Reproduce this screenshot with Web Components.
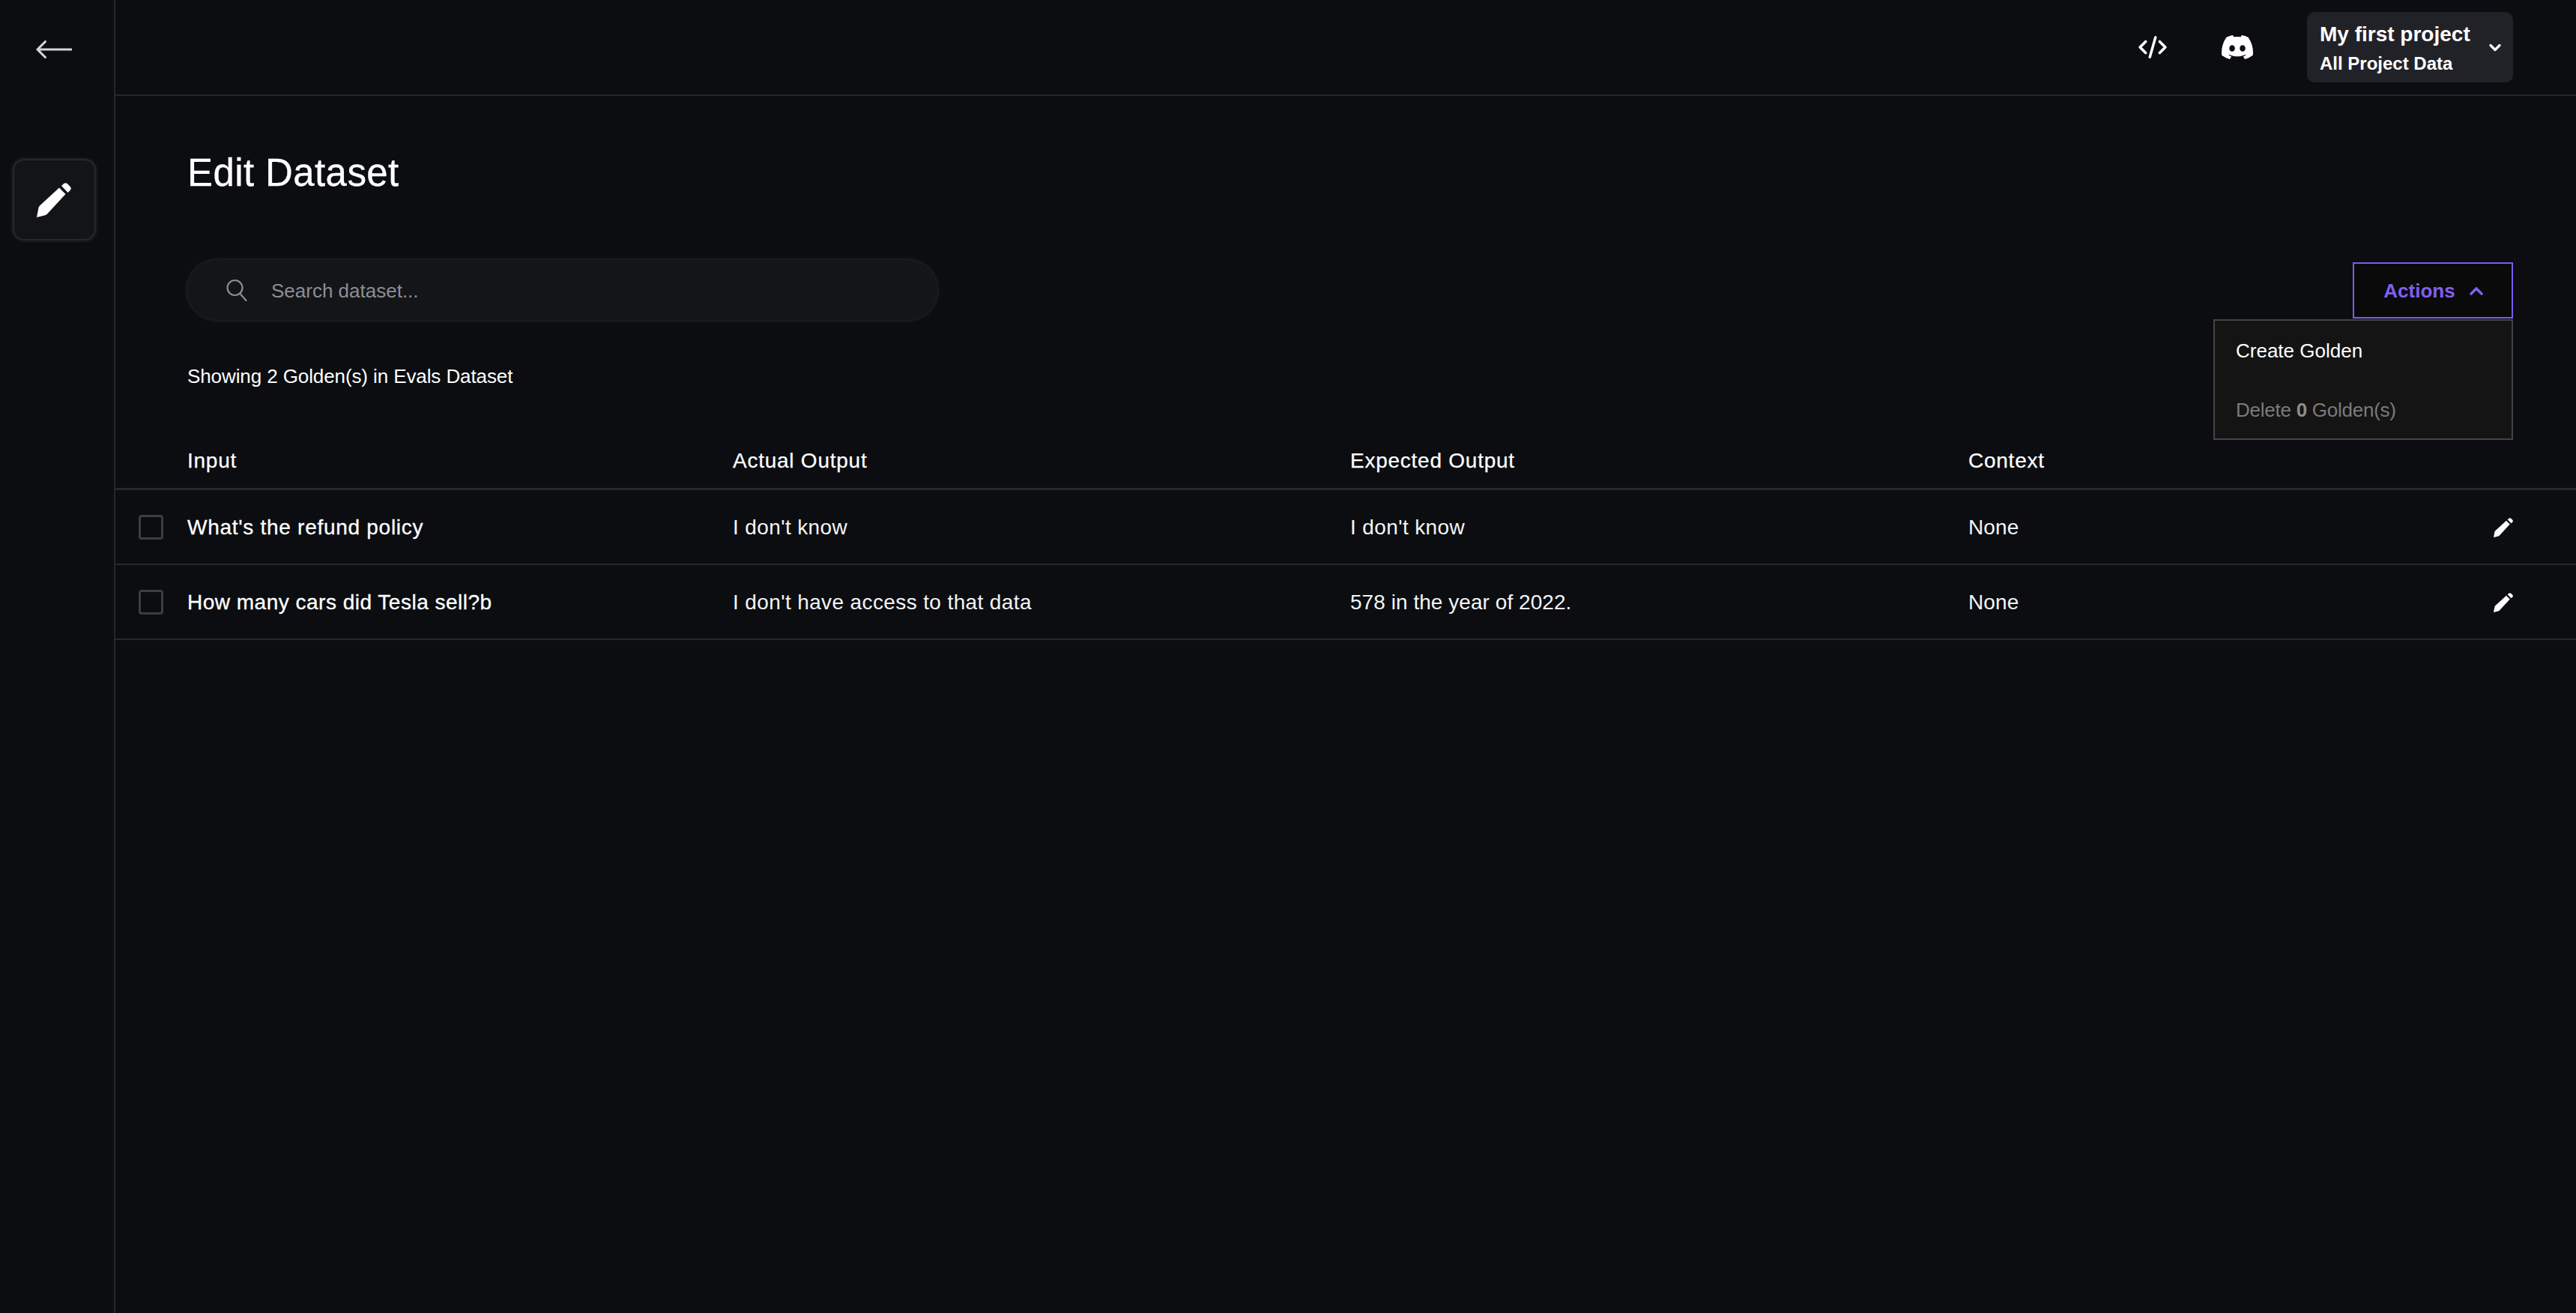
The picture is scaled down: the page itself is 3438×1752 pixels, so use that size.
<!DOCTYPE html>
<html><head><meta charset="utf-8"><title>Edit Dataset</title>
<style>
html,body{margin:0;height:100%;background:#0b0d11;color:#fff;font-family:"Liberation Sans",Arial,sans-serif}
</style></head><body>
<app-shell>
  <side-rail slot="rail"></side-rail>
  <top-bar slot="top"></top-bar>
  <dataset-page></dataset-page>
</app-shell>
<script>
const PENCIL=`<g fill="currentColor"><path d="M0 46 L2.5 33 Q3 31.5 4 30.5 L30 6.5 L38.5 15 L14 41.5 Q13 42.7 11 43.3 Z"/><path d="M33 4 L36 1.3 Q38.5 -.7 41 1.3 L44.7 5 Q46.7 7.7 44.7 10 L41.5 13 Z"/></g>`;
function def(name,css,html){
  customElements.define(name,class extends HTMLElement{
    constructor(){super();const r=this.attachShadow({mode:'open'});
      r.innerHTML=`<style>${css}</style>${typeof html==='function'?html(this):html}`;}
  });
}
def('icon-pencil',`:host{display:inline-flex;width:var(--s,26px);height:var(--s,26px);color:#fff}svg{width:100%;height:100%;display:block}`,
  `<svg viewBox="0 0 46 46">${PENCIL}</svg>`);
def('app-shell',`:host{display:grid;grid-template-columns:154px 1fr;grid-template-rows:128px 1fr;height:100vh;overflow:hidden}
  ::slotted([slot=rail]){grid-row:1 / 3}`,
  `<slot name="rail"></slot><slot name="top"></slot><slot></slot>`);
def('side-rail',`:host{display:flex;flex-direction:column;align-items:center;border-right:2px solid #25272a;box-sizing:border-box;width:154px;padding-right:8px}
  svg.back{width:48px;height:24px;margin-top:54px;display:block}
  .tile{margin-top:135px;width:109px;height:107px;box-sizing:border-box;border-radius:14px;background:#131417;border:1px solid #2b2c30;box-shadow:0 0 5px rgba(255,255,255,.22);display:flex;align-items:center;justify-content:center;--s:46px}`,
  `<svg class="back" viewBox="0 0 48 24" fill="none" stroke="#d4d6d8" stroke-width="3" stroke-linecap="round" stroke-linejoin="round"><path d="M47 12H2M12.500 1.500 2 12l10.500 10.500"/></svg>
   <div class="tile"><icon-pencil></icon-pencil></div>`);
def('top-bar',`:host{display:flex;align-items:center;justify-content:flex-end;height:128px;box-sizing:border-box;border-bottom:2px solid #25272a;padding:0 84px 16px 0}
  .code{width:38px;height:30px;display:block;margin-right:73px}
  .disc{width:42px;height:32px;display:block;margin-right:72px}
  .proj{display:flex;align-items:center;width:275px;height:94px;box-sizing:border-box;background:#212227;border-radius:10px;padding:0 16px 0 17px;font-weight:700;margin-top:16px}
  .t{flex:1;display:flex;flex-direction:column;gap:0;padding-top:2px}
  .a{font-size:28px;line-height:40px}.b{font-size:24px;line-height:36px;margin-top:1px}
  .chev{width:16px;height:11px;display:block}`,
  `<svg class="code" style="margin-top:16px" viewBox="0 0 40 32" fill="none" stroke="#fff" stroke-width="3.800" stroke-linecap="round" stroke-linejoin="round"><path d="M10 8 2 16l8 8M30 8l8 8-8 8M24 2 16 30"/></svg>
   <svg class="disc" style="margin-top:16px" viewBox="0 0 16 12.200" fill="#fff"><path transform="translate(0 -1.900)" d="M13.545 2.907a13.227 13.227 0 0 0-3.257-1.011.05.05 0 0 0-.052.025c-.141.25-.297.577-.406.833a12.19 12.19 0 0 0-3.658 0 8.258 8.258 0 0 0-.412-.833.051.051 0 0 0-.052-.025c-1.125.194-2.22.534-3.257 1.011a.041.041 0 0 0-.021.018C.356 6.024-.213 9.047.066 12.032c.001.014.01.028.021.037a13.276 13.276 0 0 0 3.995 2.02.05.05 0 0 0 .056-.019c.308-.42.582-.863.818-1.329a.05.05 0 0 0-.01-.059.051.051 0 0 0-.018-.011 8.875 8.875 0 0 1-1.248-.595.05.05 0 0 1-.02-.066.051.051 0 0 1 .015-.019c.084-.063.168-.129.248-.195a.05.05 0 0 1 .051-.007c2.619 1.196 5.454 1.196 8.041 0a.052.052 0 0 1 .053.007c.08.066.164.132.248.195a.051.051 0 0 1-.004.085 8.254 8.254 0 0 1-1.249.594.05.05 0 0 0-.03.03.052.052 0 0 0 .003.041c.24.465.515.909.817 1.329a.05.05 0 0 0 .056.019 13.235 13.235 0 0 0 4.001-2.02.049.049 0 0 0 .021-.037c.334-3.451-.559-6.449-2.366-9.106a.034.034 0 0 0-.02-.019Zm-8.198 7.307c-.789 0-1.438-.724-1.438-1.612 0-.889.637-1.613 1.438-1.613.807 0 1.45.73 1.438 1.613 0 .888-.637 1.612-1.438 1.612Zm5.316 0c-.788 0-1.438-.724-1.438-1.612 0-.889.637-1.613 1.438-1.613.807 0 1.451.73 1.438 1.613 0 .888-.631 1.612-1.438 1.612Z"/></svg>
   <div class="proj"><div class="t"><span class="a">My first project</span><span class="b">All Project Data</span></div>
   <svg class="chev" viewBox="0 0 16 11" fill="none" stroke="#fff" stroke-width="3.200" stroke-linecap="round" stroke-linejoin="round"><path d="m2 2.500 6 6 6-6"/></svg></div>`);
def('search-box',`:host{display:flex;align-items:center;width:1003px;height:82px;box-sizing:border-box;border-radius:41px;background:#141517;border:1px solid #1d1e21;box-shadow:0 0 5px rgba(255,255,255,.1);padding-left:51px;font-size:26px;color:#8b8e96}
  svg{width:30px;height:30px;margin-right:31px;display:block;flex:none}
  span{margin-top:2px}`,
  `<svg viewBox="0 0 30 30" fill="none" stroke="#8b8e96" stroke-width="2.200" stroke-linecap="round"><circle cx="12.500" cy="12" r="10"/><path d="m19.500 20 8 9"/></svg><span>Search dataset...</span>`);
def('actions-menu',`:host{display:block;position:relative;width:214px;height:75px;font-size:26px}
  .btn{display:flex;align-items:center;justify-content:center;width:214px;height:75px;box-sizing:border-box;border:2px solid #7a5cf0;background:#0a0a0b;color:#7f5ff0;font-weight:700;padding-top:2px;padding-left:2px}
  svg{width:20px;height:12px;margin-left:18px;display:block}
  .menu{position:absolute;top:76px;right:0;width:400px;height:161px;box-sizing:border-box;border:2px solid #444;background:#141414}
  .i{position:absolute;left:28px}.c{top:25px}.d{top:104px;color:#7b7b7b;letter-spacing:-.25px}.d b{color:#8d8d8d}`,
  `<div class="btn"><span>Actions</span><svg viewBox="0 0 20 12" fill="none" stroke="#7f5ff0" stroke-width="3.600" stroke-linecap="round" stroke-linejoin="round"><path d="m3 10 7-7 7 7"/></svg></div>
   <div class="menu"><div class="i c">Create Golden</div><div class="i d">Delete <b>0</b> Golden(s)</div></div>`);
const GRID=`display:grid;grid-template-columns:96px 728px 824px 825px 1fr;align-items:center;box-sizing:border-box;width:100%;font-size:28px;padding-right:84px`;
def('table-head',`:host{${GRID};height:77px;border-bottom:3px solid #26282b;letter-spacing:.75px;-webkit-text-stroke:.25px #fff;padding-top:2px}`,
  `<span></span><span>Input</span><span>Actual Output</span><span>Expected Output</span><span>Context</span>`);
def('table-row',`:host{${GRID};height:100px;border-bottom:2px solid #26282b;letter-spacing:.38px;color:#f4f4f5}
  .box{width:33px;height:33px;box-sizing:border-box;border:3px solid #3c3d40;border-radius:4px;justify-self:start;margin-left:31px}
  .cell{margin-top:2px}
  .in{letter-spacing:var(--ls,.6px);color:#fff;-webkit-text-stroke:.3px #fff}
  .ctx{display:flex;align-items:center;justify-content:space-between}
  .ctx span{letter-spacing:.1px}
  .ex{letter-spacing:var(--es,.38px)}
  icon-pencil{--s:26px}`,
  h=>`<span class="box"></span><span class="cell in">${h.getAttribute('input')}</span><span class="cell">${h.getAttribute('actual')}</span><span class="cell ex">${h.getAttribute('expected')}</span><span class="cell ctx"><span>None</span><icon-pencil></icon-pencil></span>`);
def('dataset-page',`:host{display:block;min-width:0}
  h1{margin:73px 0 85px 96px;font-size:51px;line-height:60px;font-weight:400;letter-spacing:.4px;-webkit-text-stroke:.3px #fff}
  .bar{display:flex;justify-content:space-between;align-items:center;margin-left:95px;margin-right:84px;height:82px}
  p{margin:59px 0 60px 96px;font-size:26px;line-height:30px;letter-spacing:-.1px}`,
  `<h1>Edit Dataset</h1>
   <div class="bar"><search-box></search-box><actions-menu></actions-menu></div>
   <p>Showing 2 Golden(s) in Evals Dataset</p>
   <table-head></table-head>
   <table-row style="--ls:.72px" input="What's the refund policy" actual="I don't know" expected="I don't know"></table-row>
   <table-row style="--ls:.5px;--es:.05px" input="How many cars did Tesla sell?b" actual="I don't have access to that data" expected="578 in the year of 2022."></table-row>`);
</script>
</body></html>
